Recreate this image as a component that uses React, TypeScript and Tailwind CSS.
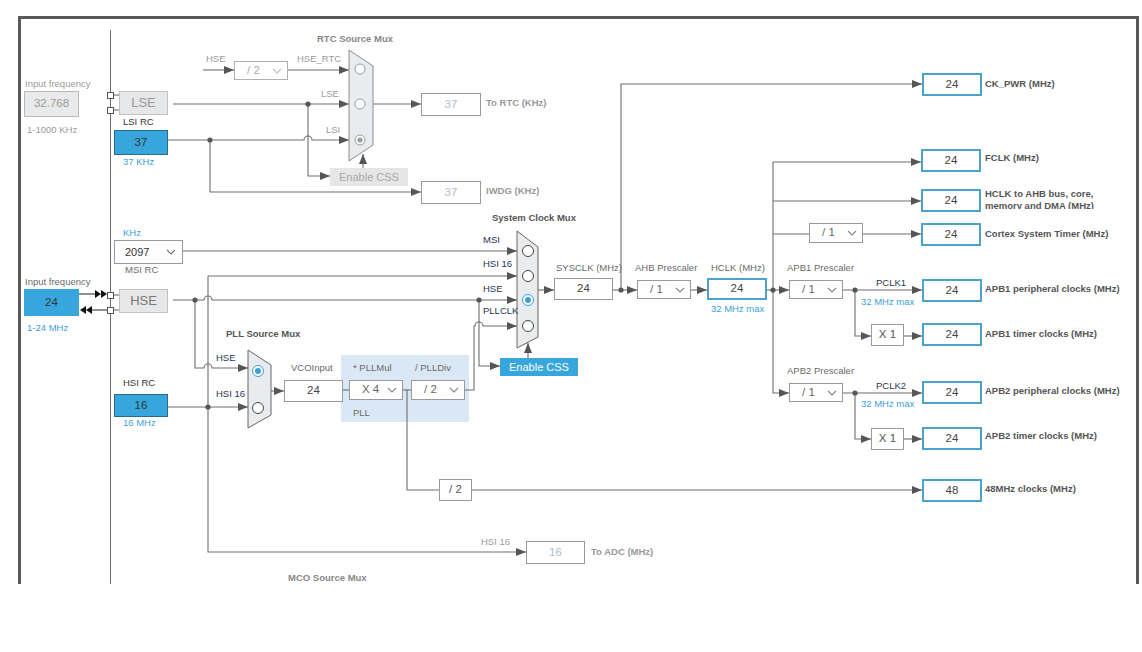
import React from 'react';

const font = "font-['Liberation_Sans',Arial,sans-serif]";

const Chevron = ({ c = '#8a8a8a' }: { c?: string }) => (
  <svg width="10" height="6" viewBox="0 0 10 6">
    <path d="M1 1 L5 5 L9 1" fill="none" stroke={c} strokeWidth="1.1" />
  </svg>
);

const tone = {
  muted: 'text-[9.5px] text-[#9a9a9a]',
  dark: 'text-[9.5px] text-[#333]',
  dim: 'text-[9.5px] text-[#6a6a6a]',
  navy: 'text-[9.5px] text-[#1f3657]',
  blue: 'text-[9.5px] text-[#3d9fd6]',
  head: 'text-[9.5px] font-bold text-[#555]',
  headGray: 'text-[9.5px] font-bold text-[#888]',
  out: 'text-[9.5px] font-bold text-[#555]',
  outGray: 'text-[9.5px] font-bold text-[#999]',
};

const labels: [string, string, string][] = [
  ['left-[25px] top-[78px]', 'Input frequency', tone.muted],
  ['left-[27px] top-[124px]', '1-1000 KHz', tone.muted],
  ['left-[123px] top-[116px]', 'LSI RC', tone.dark],
  ['left-[123px] top-[156px]', '37 KHz', tone.blue],
  ['left-[317px] top-[33px]', 'RTC Source Mux', tone.headGray],
  ['left-[206px] top-[53px]', 'HSE', tone.muted],
  ['left-[297px] top-[53px]', 'HSE_RTC', tone.muted],
  ['left-[321px] top-[88px]', 'LSE', tone.muted],
  ['left-[326px] top-[124px]', 'LSI', tone.muted],
  ['left-[486px] top-[97px]', 'To RTC (KHz)', tone.outGray],
  ['left-[486px] top-[185px]', 'IWDG (KHz)', tone.outGray],
  ['left-[123px] top-[227px]', 'KHz', tone.blue],
  ['left-[125px] top-[264px]', 'MSI RC', tone.dim],
  ['left-[25px] top-[276px]', 'Input frequency', tone.dim],
  ['left-[27px] top-[322px]', '1-24 MHz', tone.blue],
  ['left-[123px] top-[377px]', 'HSI RC', tone.dark],
  ['left-[123px] top-[417px]', '16 MHz', tone.blue],
  ['left-[226px] top-[328px]', 'PLL Source Mux', tone.head],
  ['left-[216px] top-[352px]', 'HSE', tone.navy],
  ['left-[216px] top-[388px]', 'HSI 16', tone.navy],
  ['left-[291px] top-[362px]', 'VCOInput', tone.dim],
  ['left-[353px] top-[362px]', '* PLLMul', tone.dim],
  ['left-[415px] top-[362px]', '/ PLLDiv', tone.dim],
  ['left-[353px] top-[407px]', 'PLL', tone.dim],
  ['left-[492px] top-[212px]', 'System Clock Mux', tone.head],
  ['left-[483px] top-[234px]', 'MSI', tone.navy],
  ['left-[483px] top-[258px]', 'HSI 16', tone.navy],
  ['left-[483px] top-[283px]', 'HSE', tone.navy],
  ['left-[483px] top-[305px]', 'PLLCLK', tone.navy],
  ['left-[556px] top-[262px]', 'SYSCLK (MHz)', tone.dim],
  ['left-[635px] top-[262px]', 'AHB Prescaler', tone.dim],
  ['left-[711px] top-[262px]', 'HCLK (MHz)', tone.dim],
  ['left-[711px] top-[303px]', '32 MHz max', tone.blue],
  ['left-[787px] top-[262px]', 'APB1 Prescaler', tone.dim],
  ['left-[876px] top-[277px]', 'PCLK1', tone.navy],
  ['left-[861px] top-[296px]', '32 MHz max', tone.blue],
  ['left-[787px] top-[365px]', 'APB2 Prescaler', tone.dim],
  ['left-[876px] top-[380px]', 'PCLK2', tone.navy],
  ['left-[861px] top-[398px]', '32 MHz max', tone.blue],
  ['left-[985px] top-[78px]', 'CK_PWR (MHz)', tone.out],
  ['left-[985px] top-[152px]', 'FCLK (MHz)', tone.out],
  ['left-[985px] top-[228px]', 'Cortex System Timer (MHz)', tone.out],
  ['left-[985px] top-[283px]', 'APB1 peripheral clocks (MHz)', tone.out],
  ['left-[985px] top-[328px]', 'APB1 timer clocks (MHz)', tone.out],
  ['left-[985px] top-[385px]', 'APB2 peripheral clocks (MHz)', tone.out],
  ['left-[985px] top-[430px]', 'APB2 timer clocks (MHz)', tone.out],
  ['left-[985px] top-[483px]', '48MHz clocks (MHz)', tone.out],
  ['left-[481px] top-[536px]', 'HSI 16', tone.muted],
  ['left-[591px] top-[546px]', 'To ADC (MHz)', tone.outGray],
  ['left-[288px] top-[572px]', 'MCO Source Mux', tone.headGray],
];

// blue-framed output values
const outputs: [string, string][] = [
  ['left-[922px] top-[73px] w-[60px] h-[23px]', '24'],
  ['left-[921px] top-[149px] w-[60px] h-[23px]', '24'],
  ['left-[921px] top-[189px] w-[60px] h-[23px]', '24'],
  ['left-[921px] top-[223px] w-[60px] h-[23px]', '24'],
  ['left-[707px] top-[278px] w-[60px] h-[22px]', '24'],
  ['left-[922px] top-[279px] w-[60px] h-[23px]', '24'],
  ['left-[922px] top-[323px] w-[60px] h-[23px]', '24'],
  ['left-[922px] top-[381px] w-[60px] h-[23px]', '24'],
  ['left-[922px] top-[427px] w-[60px] h-[23px]', '24'],
  ['left-[922px] top-[479px] w-[60px] h-[23px]', '48'],
];

// plain grey-framed values
const plain: [string, string, string][] = [
  ['left-[554px] top-[278px] w-[59px] h-[22px]', '24', 'text-[#444]'],
  ['left-[284px] top-[380px] w-[59px] h-[22px]', '24', 'text-[#444]'],
  ['left-[421px] top-[93px] w-[60px] h-[23px]', '37', 'text-[#b3bccb]'],
  ['left-[421px] top-[181px] w-[60px] h-[23px]', '37', 'text-[#b3bccb]'],
  ['left-[526px] top-[541px] w-[59px] h-[23px]', '16', 'text-[#b3bccb]'],
  ['left-[871px] top-[324px] w-[33px] h-[22px]', 'X 1', 'text-[#555]'],
  ['left-[871px] top-[428px] w-[33px] h-[22px]', 'X 1', 'text-[#555]'],
  ['left-[439px] top-[479px] w-[33px] h-[22px]', '/ 2', 'text-[#555]'],
];

const drops: [string, string, boolean][] = [
  ['left-[234px] top-[61px] w-[54px] h-[19px]', '/ 2', true],
  ['left-[637px] top-[280px] w-[54px] h-[19px]', '/ 1', false],
  ['left-[789px] top-[280px] w-[54px] h-[19px]', '/ 1', false],
  ['left-[789px] top-[383px] w-[54px] h-[19px]', '/ 1', false],
  ['left-[809px] top-[223px] w-[54px] h-[20px]', '/ 1', false],
  ['left-[349px] top-[380px] w-[54px] h-[20px]', 'X 4', false],
  ['left-[411px] top-[380px] w-[54px] h-[20px]', '/ 2', false],
];

const arrowed = [
  'M183 251 H517',
  'M208 276 H517',
  'M208 276 V552 H526',
  'M168 407 H248',
  'M173 300 H204 A4 4 0 0 1 212 300 H517',
  'M195 300 V368 H204 A4 4 0 0 1 212 368 H248',
  'M479 300 V366 H500',
  'M465 390 H474 V326 H475 A4 4 0 0 1 483 326 H517',
  'M528 358 V343',
  'M363 168 V154',
  'M271 391 H284',
  'M472 490 H922',
  'M538 290 H554',
  'M613 290 H637',
  'M621 290 V84 H922',
  'M691 290 H707',
  'M767 290 H789',
  'M773 162 V393 H789',
  'M773 162 H921',
  'M773 201 H921',
  'M863 234 H921',
  'M843 290 H922',
  'M855 290 V336 H871',
  'M904 336 H922',
  'M843 393 H922',
  'M855 393 V439 H871',
  'M904 439 H922',
  'M173 104 H349',
  'M308 104 V176 H330',
  'M168 140 H304 A4 4 0 0 1 312 140 H349',
  'M210 140 V192 H421',
  'M203 70 H234',
  'M288 70 H349',
  'M373 104 H421',
];

const lines = [
  'M343 390 H349',
  'M403 390 H411',
  'M407 390 V490 H439',
  'M773 234 H809',
  'M113 95 H119',
  'M113 110 H119',
  'M113 295 H119',
  'M113 310 H119',
];

const dots = [
  [308, 104], [210, 140], [195, 300], [479, 300], [208, 407],
  [621, 290], [773, 290], [855, 290], [855, 393],
];

function Wires() {
  return (
    <svg className="absolute inset-0" width="1142" height="652" viewBox="0 0 1142 652">
      <defs>
        <marker id="arr" viewBox="0 0 10 8" refX="10" refY="4" markerWidth="10" markerHeight="8" markerUnits="userSpaceOnUse" orient="auto">
          <path d="M0 0 L10 4 L0 8 Z" fill="#555" />
        </marker>
      </defs>
      <path d="M110.5 30 V584" stroke="#6b6b6b" strokeWidth="1" />
      {arrowed.map((d, i) => (
        <path key={i} d={d} fill="none" stroke="#6e6e6e" strokeWidth="1.1" markerEnd="url(#arr)" />
      ))}
      {lines.map((d, i) => (
        <path key={i} d={d} fill="none" stroke="#6e6e6e" strokeWidth="1.1" />
      ))}
      {dots.map(([x, y], i) => (
        <circle key={i} cx={x} cy={y} r="2.6" fill="#555" />
      ))}

      {/* HSE external pins */}
      <path d="M79 294 H96 M92 310 H107" stroke="#222" strokeWidth="1.1" />
      <path d="M95 290 L101 294 L95 298 Z M101 290 L107 294 L101 298 Z" fill="#111" />
      <path d="M86 306 L80 310 L86 314 Z M92 306 L86 310 L92 314 Z" fill="#111" />
      {[92, 107, 292, 307].map((y) => (
        <rect key={y} x="107.5" y={y + 0.5} width="6" height="6" fill="#fff" stroke="#555" />
      ))}

      {/* RTC source mux (inactive) */}
      <polygon points="349,50 373,66 373,145 349,161" fill="#e9ecef" stroke="#8c8c8c" />
      <circle cx="360" cy="69" r="5" fill="#fff" stroke="#9a9a9a" />
      <circle cx="360" cy="104" r="5" fill="#fff" stroke="#9a9a9a" />
      <circle cx="360" cy="140" r="5" fill="#fff" stroke="#9a9a9a" />
      <circle cx="360" cy="140" r="2.6" fill="#9a9a9a" />

      {/* System clock mux */}
      <polygon points="517,231 538,247 538,337 517,348" fill="#e9ecef" stroke="#666" />
      <circle cx="528" cy="251" r="5.5" fill="#fff" stroke="#444" />
      <circle cx="528" cy="276" r="5.5" fill="#fff" stroke="#444" />
      <circle cx="528" cy="300" r="5.5" fill="#fff" stroke="#3a9fd6" />
      <circle cx="528" cy="300" r="3" fill="#3a9fd6" />
      <circle cx="528" cy="326" r="5.5" fill="#fff" stroke="#444" />

      {/* PLL source mux */}
      <polygon points="248,350 271,365 271,415 248,428" fill="#e9ecef" stroke="#666" />
      <circle cx="258" cy="371" r="5.5" fill="#fff" stroke="#3a9fd6" />
      <circle cx="258" cy="371" r="3" fill="#3a9fd6" />
      <circle cx="258" cy="408" r="5.5" fill="#fff" stroke="#444" />
    </svg>
  );
}

export default function App() {
  return (
    <div className={`relative w-[1142px] h-[652px] overflow-hidden bg-white pl-[18px] pt-[16px] ${font}`}>
      <div className="w-[1121px] h-[568px] border-x-[3px] border-t-[3px] border-[#595959]" />

      <div className="absolute inset-0">
        <div className="absolute left-[341px] top-[355px] w-[128px] h-[67px] bg-[#dae7f4]" />
        <Wires />

        {labels.map(([pos, text, cls], i) => (
          <div key={i} className={`absolute whitespace-nowrap leading-[11px] ${pos} ${cls}`}>{text}</div>
        ))}

        <div className="absolute left-[985px] top-[188px] h-[21px] overflow-hidden text-[9.5px] font-bold leading-[12px] text-[#555]">
          <div>HCLK to AHB bus, core,</div>
          <div>memory and DMA (MHz)</div>
        </div>

        {/* sources */}
        <div className="absolute left-[24px] top-[91px] w-[55px] h-[26px] flex items-center justify-center border border-[#b8b8b8] bg-[#e9eaeb] text-[11.5px] text-[#9a9a9a]">32.768</div>
        <div className="absolute left-[119px] top-[91px] w-[49px] h-[24px] flex items-center justify-center border border-[#c2c2c2] bg-[#e6e7e8] text-[13px] text-[#9a9a9a]">LSE</div>
        <div className="absolute left-[114px] top-[130px] w-[54px] h-[25px] flex items-center justify-center border border-[#2a6a8c] bg-[#36a6dc] text-[11.5px] text-[#333]">37</div>
        <div className="absolute left-[24px] top-[289px] w-[55px] h-[27px] flex items-center justify-center bg-[#36a6dc] text-[11.5px] text-[#333]">24</div>
        <div className="absolute left-[119px] top-[289px] w-[49px] h-[24px] flex items-center justify-center border border-[#c2c2c2] bg-[#e6e7e8] text-[13px] text-[#777]">HSE</div>
        <div className="absolute left-[114px] top-[394px] w-[54px] h-[23px] flex items-center justify-center border border-[#2a6a8c] bg-[#36a6dc] text-[11.5px] text-[#333]">16</div>
        <div className="absolute left-[114px] top-[240px] w-[69px] h-[24px] flex items-center justify-between border border-[#9a9a9a] bg-white pl-[10px] pr-[6px] text-[11px] text-[#333]">
          <span>2097</span>
          <Chevron c="#777" />
        </div>

        <div className="absolute left-[330px] top-[168px] w-[78px] h-[18px] flex items-center justify-center bg-[#e6e6e6] text-[11px] text-[#a8a8a8]">Enable CSS</div>
        <div className="absolute left-[500px] top-[358px] w-[78px] h-[18px] flex items-center justify-center bg-[#36a6dc] text-[11px] text-white">Enable CSS</div>

        {plain.map(([pos, v, c], i) => (
          <div key={i} className={`absolute flex items-center justify-center border border-[#9a9a9a] bg-white text-[11.5px] ${pos} ${c}`}>{v}</div>
        ))}

        {drops.map(([pos, v, off], i) => (
          <div key={i} className={`absolute flex items-center justify-between border bg-white pl-[12px] pr-[5px] text-[11.5px] ${pos} ${off ? 'border-[#b0b0b0] text-[#aaa]' : 'border-[#9a9a9a] text-[#666]'}`}>
            <span>{v}</span>
            <Chevron c={off ? '#c0c0c0' : '#888'} />
          </div>
        ))}

        {outputs.map(([pos, v], i) => (
          <div key={i} className={`absolute flex items-center justify-center border-2 border-[#4aa3c8] bg-white text-[11.5px] text-[#444] ${pos}`}>{v}</div>
        ))}
      </div>
    </div>
  );
}
